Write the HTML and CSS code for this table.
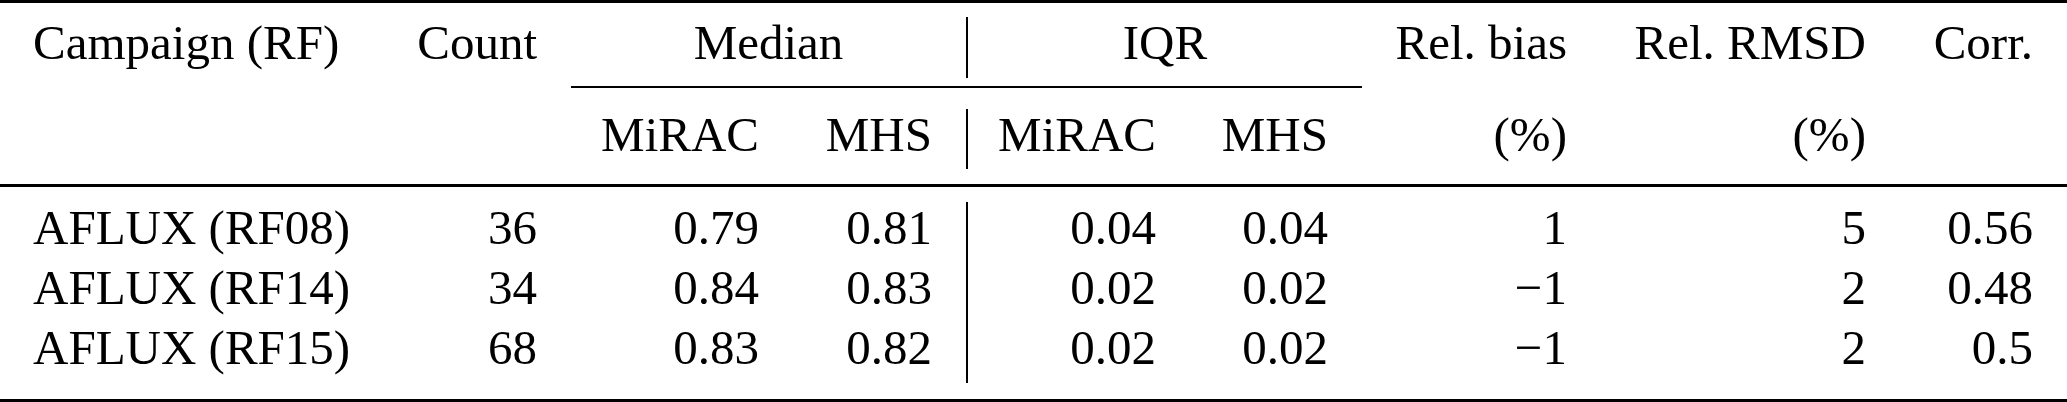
FILE: index.html
```html
<!DOCTYPE html>
<html lang="en">
<head>
    <meta charset="UTF-8">
    <meta name="viewport" content="width=device-width, initial-scale=1.0">
    <title>Campaign statistics</title>
    <link rel="stylesheet" href="styles.css">
</head>
<body>

<div class="stats-table">
    <div class="rule rule-top"></div>

    <div class="row row-head-first">
        <div class="cell cell-label">Campaign (RF)</div>
        <div class="cell">Count</div>
        <div class="cell cell-group">Median</div>
        <div class="vrule"></div>
        <div class="cell cell-group">IQR</div>
        <div class="cell">Rel. bias</div>
        <div class="cell">Rel. RMSD</div>
        <div class="cell">Corr.</div>
    </div>

    <div class="cmid-row">
        <div class="cmid"></div>
    </div>

    <div class="row">
        <div class="cell cell-label"></div>
        <div class="cell"></div>
        <div class="cell">MiRAC</div>
        <div class="cell">MHS</div>
        <div class="vrule"></div>
        <div class="cell">MiRAC</div>
        <div class="cell">MHS</div>
        <div class="cell">(%)</div>
        <div class="cell">(%)</div>
        <div class="cell"></div>
    </div>

    <div class="rule rule-mid"></div>

    <div class="row">
        <div class="cell cell-label">AFLUX (RF08)</div>
        <div class="cell">36</div>
        <div class="cell">0.79</div>
        <div class="cell">0.81</div>
        <div class="vrule"></div>
        <div class="cell">0.04</div>
        <div class="cell">0.04</div>
        <div class="cell">1</div>
        <div class="cell">5</div>
        <div class="cell">0.56</div>
    </div>
    <div class="row">
        <div class="cell cell-label">AFLUX (RF14)</div>
        <div class="cell">34</div>
        <div class="cell">0.84</div>
        <div class="cell">0.83</div>
        <div class="vrule"></div>
        <div class="cell">0.02</div>
        <div class="cell">0.02</div>
        <div class="cell">&minus;1</div>
        <div class="cell">2</div>
        <div class="cell">0.48</div>
    </div>
    <div class="row row-last">
        <div class="cell cell-label">AFLUX (RF15)</div>
        <div class="cell">68</div>
        <div class="cell">0.83</div>
        <div class="cell">0.82</div>
        <div class="vrule"></div>
        <div class="cell">0.02</div>
        <div class="cell">0.02</div>
        <div class="cell">&minus;1</div>
        <div class="cell">2</div>
        <div class="cell">0.5</div>
    </div>

    <div class="rule rule-bottom"></div>
</div>

</body>
</html>
```

FILE: styles.css
```css
body {
    margin: 0;
    background-color: #fff;
    color: #000;
    font-family: "Liberation Serif", "Times New Roman", serif;
    font-size: 49px;
}

.stats-table {
    width: 2067px;
}

.row,
.cmid-row {
    display: grid;
    grid-template-columns: 383px 188px 222px 173px 2px 222px 172px 239px 299px 167px;
}

.row {
    height: 60px;
    line-height: 52px;
}

.row-head-first,
.row-last {
    height: 61px;
}

.cell {
    padding-right: 34px;
    text-align: right;
    white-space: nowrap;
}

.cell-label {
    padding: 0 0 0 33px;
    text-align: left;
}

.cell-group {
    grid-column: span 2;
    padding: 0;
    text-align: center;
}

.vrule {
    background-color: #000;
}

/* booktabs style rules */
.rule {
    height: 3px;
    background-color: #000;
}

.rule-top {
    margin-bottom: 14px;
}

.rule-mid {
    margin: 15px 0;
}

.rule-bottom {
    margin-top: 16px;
}

.cmid-row {
    height: 2px;
    margin: 8px 0 21px;
}

.cmid {
    grid-column: 3 / 8;
    background-color: #000;
}
```
